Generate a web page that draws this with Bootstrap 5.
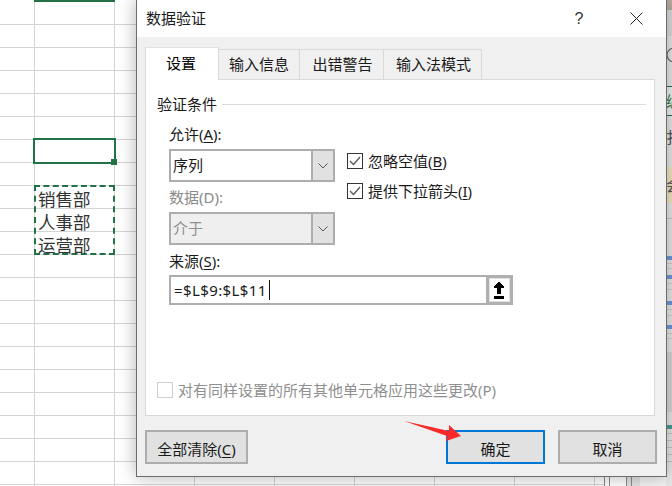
<!DOCTYPE html>
<html lang="zh-CN">
<head>
<meta charset="utf-8">
<title>数据验证</title>
<link href="https://cdn.jsdelivr.net/npm/bootstrap@5.3.0/dist/css/bootstrap.min.css" rel="stylesheet">
<style>
html,body{width:672px;height:486px;overflow:hidden;margin:0;background:#fff}
body{font-family:"Noto Sans","Noto Sans CJK SC",sans-serif;font-size:15px;line-height:20px;color:#1a1a1a}
.stage{width:672px;height:486px;position:relative;overflow:hidden}
.sheet{flex:1 1 auto;position:relative;background-color:#fff}
.grid-h{position:absolute;inset:0;top:2px;background:repeating-linear-gradient(to bottom,transparent 0,transparent 22px,#d4d4d4 22px,#d4d4d4 23px)}
.grid-v{position:absolute;inset:0;left:34px;background:repeating-linear-gradient(to right,#d4d4d4 0,#d4d4d4 1px,transparent 1px,transparent 80px)}
.far-lines{position:absolute;left:604px;top:476px;width:62px;height:10px;background:linear-gradient(to right,#8a8a8a 0,#8a8a8a 1px,#fff 1px,#fff 5px,#8a8a8a 5px,#8a8a8a 6px,#fff 6px,#fff 22px,#8a8a8a 22px,#8a8a8a 23px,#e4e4e4 23px,#e4e4e4 27px,#8a8a8a 27px,#8a8a8a 28px,#e4e4e4 28px,#e4e4e4 36px,#f4f4f4 36px)}
.side-strip{flex:0 0 6px;background:#e9e9e9;overflow:hidden;display:block}
.top-bar{position:absolute;left:34px;top:0;width:81px;height:2px;background:#217346}
.sel-cell{position:absolute;left:33px;top:138px;width:83px;height:26px;border:2px solid #217346}
.sel-handle{position:absolute;right:-3px;bottom:-3px;width:6px;height:6px;background:#217346}
.copy-range{position:absolute;left:34px;top:185px;width:81px;height:70px;border:2px dashed #217346;padding:0 0 0 2px;font-size:17.5px;line-height:23px;color:#333;font-family:"Noto Sans CJK SC",sans-serif}
.dialog{position:absolute;left:136px;top:-1px;width:531px;height:478px;background:#f0f0f0;border:1px solid #6c6c6c;box-shadow:0 0 17px rgba(0,0,0,.3);display:flex;flex-direction:column}
.dlg-title{height:37px;background:#fff;padding:8px 9px 0 9px;flex:0 0 auto}
.dlg-title .ttl{font-size:15px}
.dlg-help{width:14px;margin-top:1px;text-align:center;font-size:16px;margin-right:44px;font-family:"Liberation Sans",sans-serif;color:#333}
.dlg-close{width:13px;height:13px;margin:4px 14px 0 0}
.dlg-body{flex:1 1 auto;padding:10px 10px 0 8px;display:flex;flex-direction:column}
.tabs-x{border-bottom:0;padding:0;margin:0;align-items:flex-end;height:32px;gap:0;--bs-nav-tabs-border-width:0}
.tabs-x .nav-link{height:30px;background:#f0f0f0;color:#1a1a1a;border:1px solid #d9d9d9;border-bottom:0;border-left:0;border-radius:0;padding:4px 0 0;text-align:center;margin:0;font-size:15px;line-height:20px}
.tabs-x .nav-link.active{background:#fff;border-left:1px solid #d9d9d9;border-right:1px solid #d9d9d9;position:relative;z-index:1;margin-bottom:-1px;height:33px;padding:5px 2px 0 0}
.tabs-x .nav-link.t3,.tabs-x .nav-link.t4{padding-left:2px}
.t1{width:74px}.t2{width:81px}.t3{width:84px}.t4{width:98px}
.panel-x{height:337px;width:510px;background:#fff;border:1px solid #d9d9d9;padding:14px 8px 0 11px;flex:0 0 auto}
.grp-legend{height:20px}
.grp-line{height:1px;background:#dcdcdc;margin-left:5px;flex:1 1 auto}
.grp-body{padding-left:12px;margin-top:10px}
.left-col{width:166px}
.fld-label{display:block;height:20px;margin:0}
.fld-label.off{color:#8a8a8a;margin-top:5px}
.fld-label.src{margin-top:6px}
.combo{display:flex;width:166px;height:33px;border:2px solid #adadad;background:#fff;margin-top:5px;border-radius:0;flex-wrap:nowrap}
.combo.off{background:#efefef;color:#8f8f8f}
.combo .val{flex:1 1 auto;padding:4px 0 0 2px;line-height:20px}
.combo .arr{flex:0 0 20px;background:#e1e1e1;border-left:2px solid #adadad;display:flex;align-items:center;justify-content:center;box-sizing:content-box}
.chk-col{padding:29px 0 0 12px;display:flex;flex-direction:column;gap:14px}
.chk-x{display:flex;align-items:center;gap:5px;height:16px;margin:0;padding:0;min-height:0;white-space:nowrap}
.box-x{width:16px;height:16px;border:1px solid #333;background:#fff;display:flex;align-items:center;justify-content:center;flex:0 0 auto}
.box-x.off{border-color:#cfcfcf}
.src-row{display:flex;width:344px;height:30px;margin-top:4px;border:1px solid #adadad;border-width:2px 0 2px 2px;background:#fff}
.src-row .val{flex:1 1 auto;padding:3px 0 0 3px;line-height:20px;font-size:15px;letter-spacing:.4px;display:flex}
.caret-x{display:inline-block;width:1px;height:20px;background:#111;margin-left:2px}
.pick-btn{flex:0 0 27px;margin-top:-2px;height:30px;border:3px solid #b0b0b0;background:#fff;box-shadow:inset 0 0 0 1px #e1e1e1;display:flex;align-items:center;justify-content:center;border-radius:0;padding:0}
.apply-row{margin-top:77px;color:#8f8f8f;gap:5px;display:flex;align-items:center;height:16px;white-space:nowrap}
.dlg-foot{padding-top:14px;display:flex;justify-content:space-between;width:512px}
.btn-x{height:34px;background:#e1e1e1;border:2px solid #adadad;border-radius:0;color:#1a1a1a;font-size:15px;line-height:20px;padding:3px 0 0;text-align:center}
.btn-clear{width:103px}.btn-ok,.btn-no{width:99px}
.btn-ok{border-color:#0078d7}
.foot-right{gap:13px}
.red-arrow{position:absolute;left:400px;top:415px;width:70px;height:35px}
u{text-underline-offset:2px}
</style>
</head>
<body>
<div class="stage d-flex">
  <div class="sheet">
    <div class="grid-h"></div>
    <div class="grid-v"></div>
    <div class="far-lines"></div>
    <div class="top-bar"></div>
    <div class="sel-cell"><div class="sel-handle"></div></div>
    <div class="copy-range">销售部<br>人事部<br>运营部</div>
  </div>
  <svg class="side-strip" width="6" height="486" viewBox="0 0 6 486" aria-hidden="true">
    <rect width="6" height="486" fill="#e8e8e8"/>
    <rect width="6" height="10" fill="#b8afa2"/>
    <rect y="10" width="6" height="26" fill="#dcdcdc"/>
    <circle cx="8" cy="55" r="7" fill="none" stroke="#666" stroke-width="1.2"/>
    <rect y="86" width="6" height="29" fill="#eef3ef"/>
    <rect y="86" width="6" height="1" fill="#217346"/><rect y="115" width="6" height="1" fill="#217346"/><rect width="1" y="86" height="30" fill="#217346"/>
    <text x="0" y="107" font-size="15" fill="#217346" font-family="Noto Sans CJK SC">编</text>
    <text x="0" y="143" font-size="15" fill="#555" font-family="Noto Sans CJK SC">扌</text>
    <rect y="167" width="6" height="36" fill="#f0e6c4"/>
    <text x="0" y="191" font-size="15" fill="#555" font-family="Noto Sans CJK SC">会</text>
    <rect y="218" width="6" height="1" fill="#c8c8c8"/>
    <rect y="256" width="6" height="4" fill="#6f98d8"/><rect y="275" width="6" height="4" fill="#6f98d8"/>
    <rect y="301" width="6" height="4" fill="#6f98d8"/><rect y="325" width="6" height="4" fill="#6f98d8"/>
    <g fill="#cfcfcf"><rect y="263" width="6" height="1"/><rect y="268" width="6" height="1"/><rect y="283" width="6" height="1"/><rect y="289" width="6" height="1"/><rect y="309" width="6" height="1"/><rect y="315" width="6" height="1"/><rect y="333" width="6" height="1"/><rect y="338" width="6" height="1"/></g>
    <rect y="352" width="6" height="60" fill="#d8d8d8"/>
    <rect y="425" width="6" height="4" fill="#4f9a94"/>
    <g fill="#c4c4c4"><rect y="433" width="6" height="1"/><rect y="440" width="6" height="1"/><rect y="447" width="6" height="1"/><rect y="454" width="6" height="1"/><rect y="461" width="6" height="1"/></g>
  </svg>

  <div class="dialog">
    <div class="dlg-title d-flex align-items-start justify-content-between">
      <span class="ttl">数据验证</span>
      <span class="d-flex align-items-start">
        <span class="dlg-help">?</span>
        <svg class="dlg-close" viewBox="0 0 13 13"><path d="M.5.5l12 12M12.5.5l-12 12" stroke="#222" stroke-width="1" fill="none"/></svg>
      </span>
    </div>
    <div class="dlg-body">
      <ul class="nav nav-tabs tabs-x">
        <li class="nav-item"><a class="nav-link active t1" href="#">设置</a></li>
        <li class="nav-item"><a class="nav-link t2" href="#">输入信息</a></li>
        <li class="nav-item"><a class="nav-link t3" href="#">出错警告</a></li>
        <li class="nav-item"><a class="nav-link t4" href="#">输入法模式</a></li>
      </ul>
      <div class="panel-x">
        <div class="grp-legend d-flex align-items-center"><span>验证条件</span><span class="grp-line"></span></div>
        <div class="grp-body">
          <div class="d-flex">
            <div class="left-col">
              <label class="fld-label">允许(<u>A</u>):</label>
              <div class="combo"><span class="val">序列</span><span class="arr"><svg width="10" height="6" viewBox="0 0 10 6"><path d="M.5.5L5 5 9.5.5" fill="none" stroke="#555"/></svg></span></div>
              <label class="fld-label off">数据(D):</label>
              <div class="combo off"><span class="val">介于</span><span class="arr"><svg width="10" height="6" viewBox="0 0 10 6"><path d="M.5.5L5 5 9.5.5" fill="none" stroke="#555"/></svg></span></div>
            </div>
            <div class="chk-col">
              <div class="chk-x"><span class="box-x"><svg width="12" height="10" viewBox="0 0 12 10"><path d="M1 5l3.5 3.5L11 1" fill="none" stroke="#555" stroke-width="1.3"/></svg></span><span>忽略空值(<u>B</u>)</span></div>
              <div class="chk-x"><span class="box-x"><svg width="12" height="10" viewBox="0 0 12 10"><path d="M1 5l3.5 3.5L11 1" fill="none" stroke="#555" stroke-width="1.3"/></svg></span><span>提供下拉箭头(<u>I</u>)</span></div>
            </div>
          </div>
          <label class="fld-label src">来源(<u>S</u>):</label>
          <div class="src-row">
            <span class="val flex-grow-1">=$L$9:$L$11<span class="caret-x"></span></span>
            <button class="pick-btn" type="button" aria-label="选择区域"><svg width="11" height="17" viewBox="0 0 11 17" shape-rendering="crispEdges"><path d="M4 0h2v1h1v1h1v1h1v1h1v2H7v6H3V6H0V4h1V3h1V2h1V1h1zM0 14h10v3H0z" fill="#000"/></svg></button>
          </div>
        </div>
        <div class="apply-row"><span class="box-x off"></span><span>对有同样设置的所有其他单元格应用这些更改(P)</span></div>
      </div>
      <div class="dlg-foot">
        <button class="btn btn-x btn-clear" type="button">全部清除(<u>C</u>)</button>
        <div class="d-flex foot-right">
          <button class="btn btn-x btn-ok" type="button">确定</button>
          <button class="btn btn-x btn-no" type="button">取消</button>
        </div>
      </div>
    </div>
  </div>
  <svg class="red-arrow" viewBox="400 415 70 35" aria-hidden="true"><path d="M404 421L449 431 449 425 461 436 446 441 447 436z" fill="#fb2a2a"/></svg>
</div>
<script src="https://cdn.jsdelivr.net/npm/bootstrap@5.3.0/dist/js/bootstrap.bundle.min.js"></script>
</body>
</html>
